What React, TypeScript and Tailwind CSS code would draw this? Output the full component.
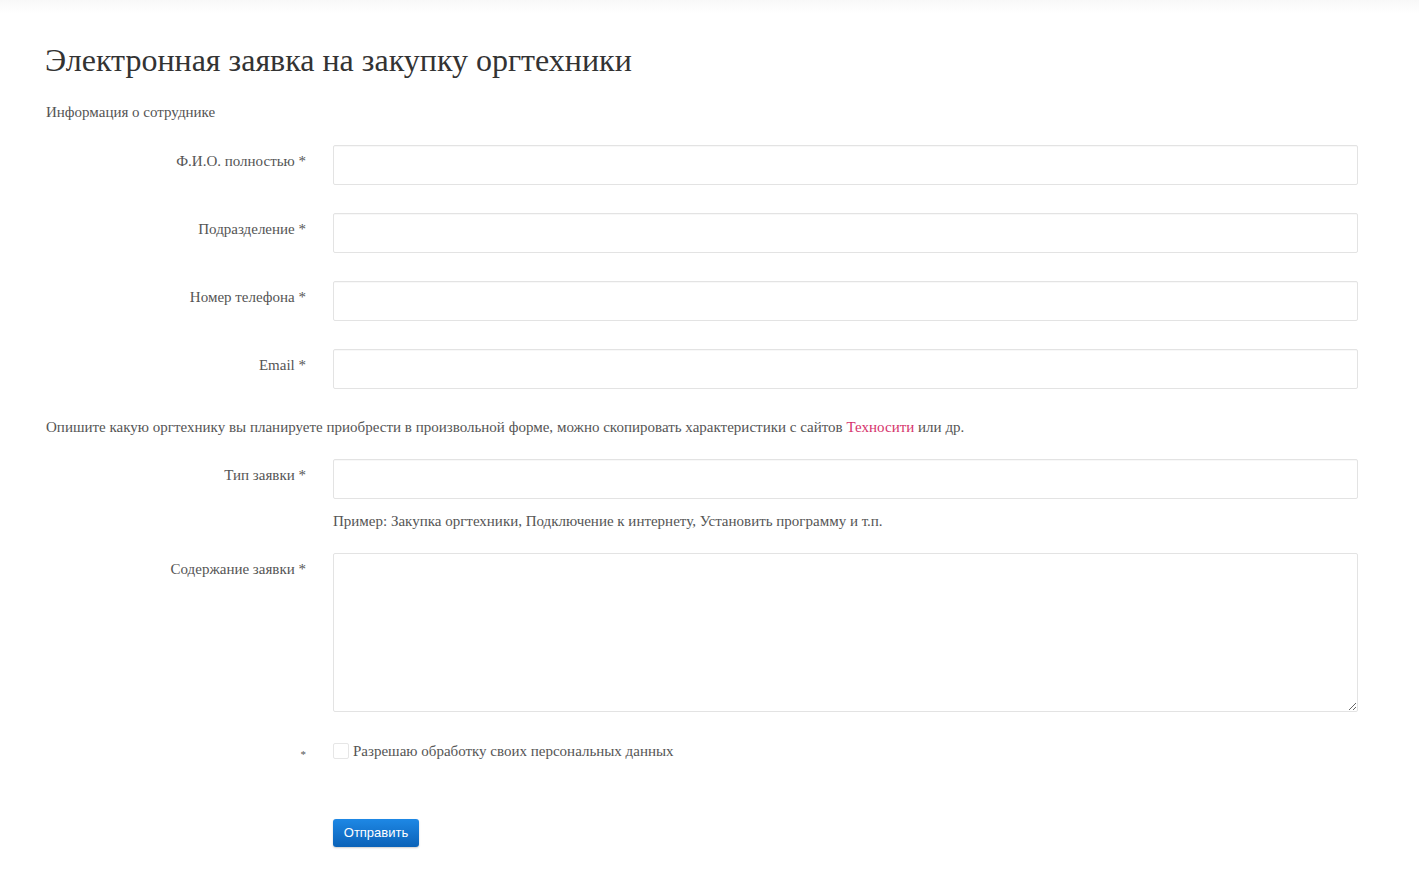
import React from "react";

const serif = { fontFamily: '"Liberation Serif", "Times New Roman", serif' };

function Row({ label, children, className = "" }: { label: string; children: React.ReactNode; className?: string }) {
  return (
    <div className={"flex " + className}>
      <div className="w-[288px] shrink-0 pr-[27px] pt-[5px] text-right text-[15px] text-[#555]">{label}</div>
      <div className="flex-1">{children}</div>
    </div>
  );
}

const inputCls =
  "block h-[40px] w-full rounded-[2px] border border-[#e3e3e3] bg-white shadow-[inset_0_1px_1px_rgba(0,0,0,0.03)] outline-none";

export default function App() {
  return (
    <div className="min-h-[892px] bg-white" style={serif}>
      <div className="h-[14px] bg-gradient-to-b from-[#f8f8f8] to-white" />
      <div className="pl-[45px] pr-[61px]">
        <h1 className="mt-[27px] text-[32px] leading-[38px] text-[#333]">Электронная заявка на закупку оргтехники</h1>
        <div className="mt-[22px] pl-[1px] text-[15px] text-[#555]">Информация о сотруднике</div>
        <div className="mt-[21px] flex flex-col gap-[28px]">
          <Row label="Ф.И.О. полностью *"><input className={inputCls} /></Row>
          <Row label="Подразделение *"><input className={inputCls} /></Row>
          <Row label="Номер телефона *"><input className={inputCls} /></Row>
          <Row label="Email *"><input className={inputCls} /></Row>
        </div>
        <div className="mt-[27px] pl-[1px] text-[15px] tracking-[0.01px] text-[#555]">
          Опишите какую оргтехнику вы планируете приобрести в произвольной форме, можно скопировать характеристики с сайтов{" "}
          <a className="text-[#d6336c]">Техносити</a> или др.
        </div>
        <Row label="Тип заявки *" className="mt-[21px]">
          <input className={inputCls} />
          <div className="mt-[11px] text-[15px] text-[#555]">Пример: Закупка оргтехники, Подключение к интернету, Установить программу и т.п.</div>
        </Row>
        <Row label="Содержание заявки *" className="mt-[20px]">
          <textarea className="block h-[159px] w-full resize-y rounded-[2px] border border-[#e3e3e3] bg-white outline-none" />
        </Row>
        <div className="mt-[28px] flex items-center">
          <div className="w-[288px] shrink-0 pr-[27px] pt-[6px] text-right text-[11px] text-[#555]">*</div>
          <div className="flex items-center">
            <span className="h-[16px] w-[16px] rounded-[2px] border border-[#e6e6e6] bg-white" />
            <span className="ml-[4px] text-[15px] text-[#555]">Разрешаю обработку своих персональных данных</span>
          </div>
        </div>
        <div className="mt-[57px] pl-[288px]">
          <button
            className="h-[28px] w-[86px] rounded-[3px] bg-gradient-to-b from-[#1e88e5] to-[#0a62b8] text-[13px] text-white shadow-[0_1px_2px_rgba(0,0,0,0.2)]"
            style={{ fontFamily: '"Liberation Sans", Arial, sans-serif' }}
          >
            Отправить
          </button>
        </div>
      </div>
    </div>
  );
}
